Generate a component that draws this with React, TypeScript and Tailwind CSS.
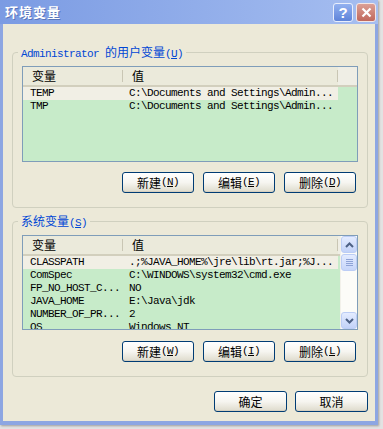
import React from "react";

function Mn({ c }: { c: string }) {
  return (
    <span className="font-['Liberation_Mono',monospace] text-[11px] tracking-[-0.6px]">
      (<span className="underline">{c}</span>)
    </span>
  );
}

function XPButton({ label, mn, wide }: { label: string; mn?: string; wide?: boolean }) {
  return (
    <div
      className={
        (wide ? "w-[73px] " : "w-[72px] ") +
        "h-[21px] rounded-[3px] border border-[#003c74] bg-linear-to-b from-[#ffffff] via-[#f6f5f0] to-[#dedbcc] flex items-center justify-center text-[12px] leading-none text-black font-['Noto_Sans_CJK_SC',sans-serif] shadow-[inset_0_-1px_0_#d6d0c0]"
      }
    >
      <span>{label}</span>
      {mn ? <Mn c={mn} /> : null}
    </div>
  );
}

function ScrollBtn({ dir }: { dir: "up" | "down" }) {
  return (
    <div className="h-[17px] rounded-[3px] border border-[#bccdf5] bg-linear-to-b from-[#e4ecff] to-[#c2d2f8] flex items-center justify-center">
      <svg width="9" height="6" viewBox="0 0 9 6">
        {dir === "up" ? (
          <path d="M1 5 L4.5 1.5 L8 5" stroke="#4d6185" strokeWidth="2" fill="none" />
        ) : (
          <path d="M1 1 L4.5 4.5 L8 1" stroke="#4d6185" strokeWidth="2" fill="none" />
        )}
      </svg>
    </div>
  );
}

function ScrollBar() {
  return (
    <div className="w-[17px] flex flex-col bg-[#fcfcf8] border-l border-[#f2f1ea]">
      <ScrollBtn dir="up" />
      <div className="mt-[1px] h-[17px] rounded-[3px] border border-[#bccdf5] bg-linear-to-b from-[#e4ecff] to-[#c6d5f9] flex flex-col items-center justify-center gap-[1px]">
        <div className="w-[7px] h-[1px] bg-[#8ea3d6]" />
        <div className="w-[7px] h-[1px] bg-[#8ea3d6]" />
        <div className="w-[7px] h-[1px] bg-[#8ea3d6]" />
        <div className="w-[7px] h-[1px] bg-[#8ea3d6]" />
      </div>
      <div className="flex-1" />
      <ScrollBtn dir="down" />
    </div>
  );
}

type Row = [string, string];

function ListView({ rows, scroll, h }: { rows: Row[]; scroll?: boolean; h: string }) {
  return (
    <div className={h + " border border-[#7f9db9] bg-[#c7ebc9] flex overflow-hidden"}>
      <div className="flex-1 flex flex-col min-w-0">
        <div className="h-[20px] shrink-0 flex bg-[#ebeadb] border-b-2 border-[#d2cfbd] font-['Noto_Sans_CJK_SC',sans-serif] text-[12px] text-black">
          <div className="w-[99px] flex items-center pl-[9px]">变量</div>
          <div className="w-[1px] my-[3px] bg-[#c9c6b4]" />
          <div className="w-[214px] flex items-center pl-[9px]">值</div>
          <div className="w-[1px] my-[3px] bg-[#c9c6b4]" />
          <div className="flex-1 bg-[#efeee5]" />
        </div>
        {rows.map((r, i) => (
          <div
            key={i}
            className={
              (i === 0 ? "bg-[#f1efe5] " : "") +
              "w-[315px] h-[13px] shrink-0 flex font-['Liberation_Mono',monospace] text-[11px] tracking-[-0.6px] leading-[13px] text-black whitespace-nowrap"
            }
          >
            <div className="w-[100px] pl-[7px] overflow-hidden">{r[0]}</div>
            <div className="w-[215px] pl-[6px] overflow-hidden">{r[1]}</div>
          </div>
        ))}
      </div>
      {scroll ? <ScrollBar /> : null}
    </div>
  );
}

function TitleBar() {
  return (
    <div className="h-[24px] shrink-0 flex items-center pl-[5px] pr-[2px] bg-linear-to-r from-[#7b9be3] to-[#a6bef0]">
      <span className="text-white font-bold text-[13px] tracking-[1px] font-['Noto_Sans_CJK_SC',sans-serif] [text-shadow:1px_1px_0_#5b76bb]">
        环境变量
      </span>
      <div className="ml-auto flex gap-[3px]">
        <div className="w-[20px] h-[19px] rounded-[3px] border border-[#e8eefc] bg-linear-to-b from-[#93b1f0] to-[#5f84d9] flex items-center justify-center text-white font-bold text-[15px] leading-none font-['Liberation_Sans',sans-serif]">
          ?
        </div>
        <div className="w-[20px] h-[19px] rounded-[3px] border border-[#f4e6e4] bg-linear-to-b from-[#dba096] to-[#c0685c] flex items-center justify-center">
          <svg width="11" height="11" viewBox="0 0 11 11">
            <path d="M1.5 1.5 L9.5 9.5 M9.5 1.5 L1.5 9.5" stroke="#ffffff" strokeWidth="2.2" />
          </svg>
        </div>
      </div>
    </div>
  );
}

export default function App() {
  const userRows: Row[] = [
    ["TEMP", "C:\\Documents and Settings\\Admin..."],
    ["TMP", "C:\\Documents and Settings\\Admin..."],
  ];
  const sysRows: Row[] = [
    ["CLASSPATH", ".;%JAVA_HOME%\\jre\\lib\\rt.jar;%J..."],
    ["ComSpec", "C:\\WINDOWS\\system32\\cmd.exe"],
    ["FP_NO_HOST_C...", "NO"],
    ["JAVA_HOME", "E:\\Java\\jdk"],
    ["NUMBER_OF_PR...", "2"],
    ["OS", "Windows_NT"],
  ];
  return (
    <div className="w-[383px] h-[429px] bg-[#e2e2e2] overflow-hidden">
      <div className="w-[378px] h-[425px] flex flex-col shadow-[1px_1px_2px_rgba(0,0,0,0.3)]">
        <TitleBar />
        <div className="flex-1 flex flex-col border-x-[3px] border-b-[4px] border-[#8da6e2] bg-[#ece9d8] pl-[9px] pr-[7px]">
          <fieldset className="mt-[21px] border border-[#d0d0bf] rounded-[4px] px-[9px] pt-[7px] pb-[14px] min-w-0">
            <legend className="-ml-[4px] px-[3px] h-[14px] leading-[14px] text-[#0046d5] text-[12px] font-['Noto_Sans_CJK_SC',sans-serif] whitespace-nowrap">
              <span className="font-['Liberation_Mono',monospace] text-[11px] tracking-[-0.6px]">Administrator </span>
              的用户变量
              <Mn c="U" />
            </legend>
            <ListView rows={userRows} h="h-[96px]" />
            <div className="mt-[10px] mr-[2px] flex justify-end gap-[9px]">
              <XPButton label="新建" mn="N" />
              <XPButton label="编辑" mn="E" />
              <XPButton label="删除" mn="D" />
            </div>
          </fieldset>
          <fieldset className="mt-[6px] border border-[#d0d0bf] rounded-[4px] px-[9px] pt-[7px] pb-[14px] min-w-0">
            <legend className="-ml-[4px] px-[3px] h-[14px] leading-[14px] text-[#0046d5] text-[12px] font-['Noto_Sans_CJK_SC',sans-serif] whitespace-nowrap">
              系统变量
              <Mn c="S" />
            </legend>
            <ListView rows={sysRows} h="h-[95px]" scroll />
            <div className="mt-[11px] mr-[2px] flex justify-end gap-[9px]">
              <XPButton label="新建" mn="W" />
              <XPButton label="编辑" mn="I" />
              <XPButton label="删除" mn="L" />
            </div>
          </fieldset>
          <div className="mt-[14px] flex justify-end gap-[8px]">
            <XPButton label="确定" wide />
            <XPButton label="取消" wide />
          </div>
        </div>
      </div>
    </div>
  );
}
